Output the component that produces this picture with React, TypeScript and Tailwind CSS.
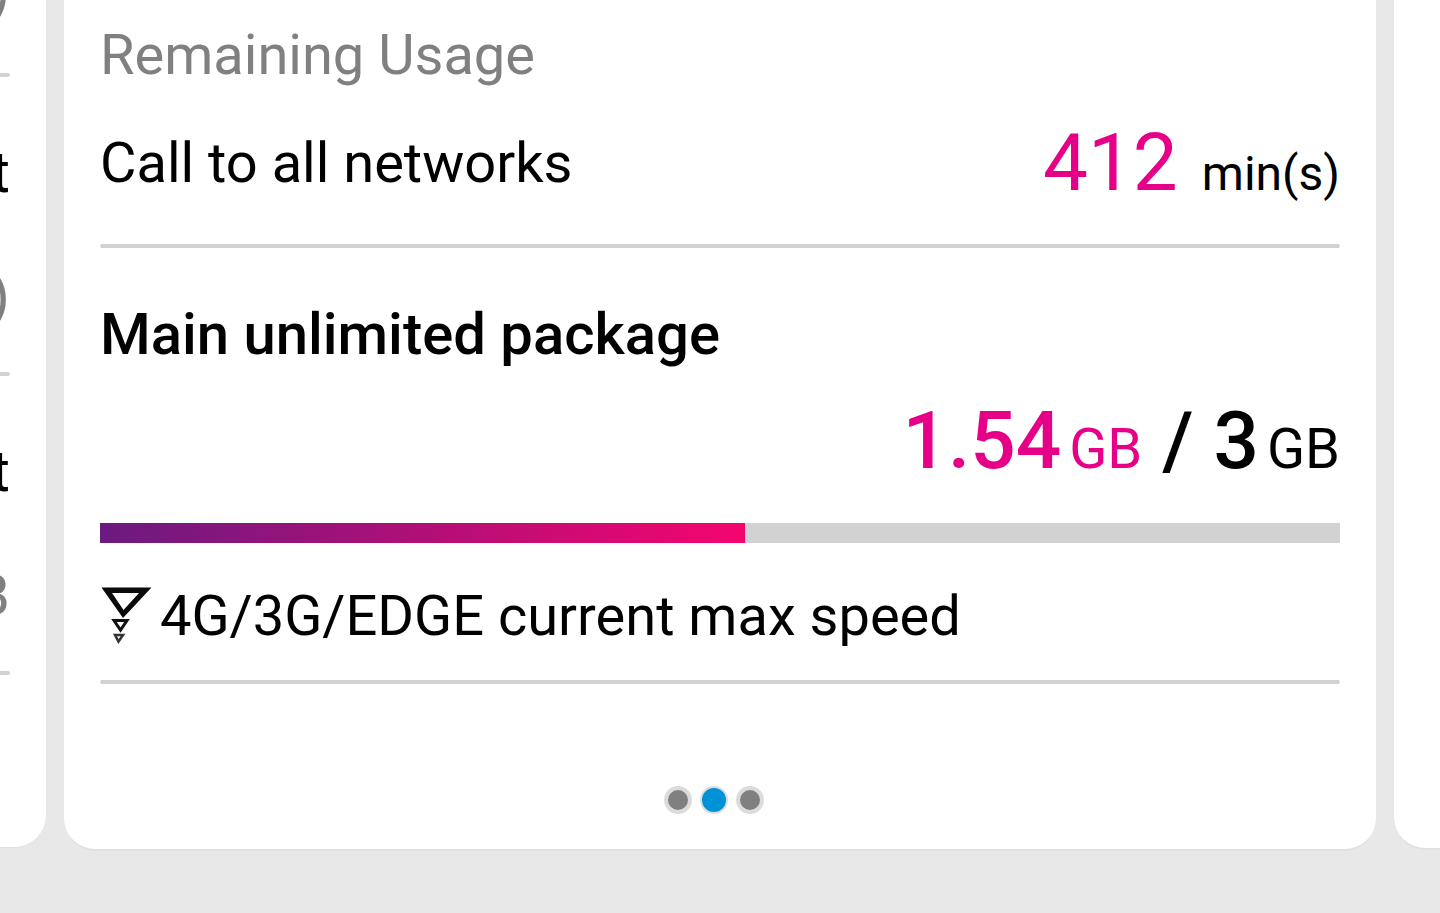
import React from "react";

const Rule = ({ className = "" }: { className?: string }) => (
  <hr className={`h-1 rounded-full border-0 bg-[#d2d2d2] ${className}`} />
);

function SpeedIcon() {
  return (
    <svg viewBox="0 0 52 60" className="h-[60px] w-[52px] shrink-0" fill="none" stroke="#111" aria-hidden="true">
      <path d="M1.500 1.500h50L23 32Z M12 7h27L23.500 24Z" fill="#0a0a0a" fillRule="evenodd" stroke="none" />
      <path d="M14 34.500h13L20.500 44Z" strokeWidth="3" />
      <path d="M15 49h8L18.500 55.500Z" strokeWidth="2.500" stroke="#333" />
    </svg>
  );
}

function PreviousCard() {
  return (
    <aside className="flex h-[848px] w-[46px] shrink-0 flex-col items-end overflow-hidden rounded-br-[32px] border-b border-[#e0e0e0] bg-white">
      <div className="flex h-[73px] w-full items-start justify-end pr-9">
        <span className="-mt-10 text-[58px] leading-[64px] text-[#808080]">)</span>
      </div>
      <Rule className="w-full -translate-x-9" />
      {[")", "B"].map((unit) => (
        <div key={unit} className="flex w-full flex-col items-end pt-[63px]">
          <span className="pr-9 text-[58px] leading-[64px]">t</span>
          <span className="mt-[60px] pr-9 text-[58px] leading-[64px] text-[#808080]">{unit}</span>
          <Rule className="mt-11 w-full -translate-x-9" />
        </div>
      ))}
    </aside>
  );
}

const pages = [1, 2, 3];

export default function App() {
  const [page, setPage] = React.useState(2);
  return (
    <main className="flex min-h-screen items-start gap-[18px] overflow-hidden bg-[#e8e8e8] font-[Roboto,sans-serif] text-black">
      <PreviousCard />

      <section className="min-w-0 flex-1 rounded-b-[32px] border-b-2 border-[#e0e0e0] bg-white px-9 pt-[23px] pb-[35px]">
        <h1 className="text-[56px] leading-[64px] text-[#808080]">Remaining Usage</h1>

        <div className="mt-[34px] flex items-center justify-between">
          <h2 className="text-[56px] leading-[64px]">Call to all networks</h2>
          <p className="flex items-baseline gap-6">
            <span className="text-[80px] leading-[84px] text-[#e60088]">412</span>
            <span className="text-[48px] leading-none">min(s)</span>
          </p>
        </div>
        <Rule className="mt-[39px]" />

        <h2 className="mt-[54px] text-[58px] leading-[64px] font-medium">Main unlimited package</h2>
        <p className="mt-[33px] flex items-baseline justify-end">
          <span className="text-[80px] leading-[84px] font-medium text-[#e60088]">1.54</span>
          <span className="ml-2 text-[56px] leading-none text-[#e60088]">GB</span>
          <span className="ml-5 text-[80px] leading-[84px] font-medium">/</span>
          <span className="ml-5 text-[80px] leading-[84px] font-medium">3</span>
          <span className="ml-2 text-[56px] leading-none">GB</span>
        </p>

        <div
          role="progressbar"
          aria-label="Main unlimited package"
          aria-valuemin={0}
          aria-valuemax={3}
          aria-valuenow={1.54}
          className="mt-10 h-5 bg-[#d2d2d2]"
        >
          <div className="h-full w-[52%] bg-linear-to-r/srgb from-[#6b1a80] to-[#f5056e]" />
        </div>

        <div className="mt-[41px] flex items-center gap-2">
          <SpeedIcon />
          <p className="text-[56px] leading-[64px]">4G/3G/EDGE current max speed</p>
        </div>
        <Rule className="mt-8" />

        <nav aria-label="Packages" className="mt-[102px] flex justify-center gap-2 pr-3">
          {pages.map((n) => (
            <button
              key={n}
              type="button"
              aria-label={`Package ${n}`}
              aria-current={n === page}
              onClick={() => setPage(n)}
              className={`size-7 rounded-full border-[#dcdcdc] ${n === page ? "border-2 bg-[#0092d6]" : "border-4 bg-[#808080]"}`}
            />
          ))}
        </nav>
      </section>

      <aside className="h-[850px] w-[46px] shrink-0 rounded-bl-[32px] border-b-2 border-[#e0e0e0] bg-white" />
    </main>
  );
}
